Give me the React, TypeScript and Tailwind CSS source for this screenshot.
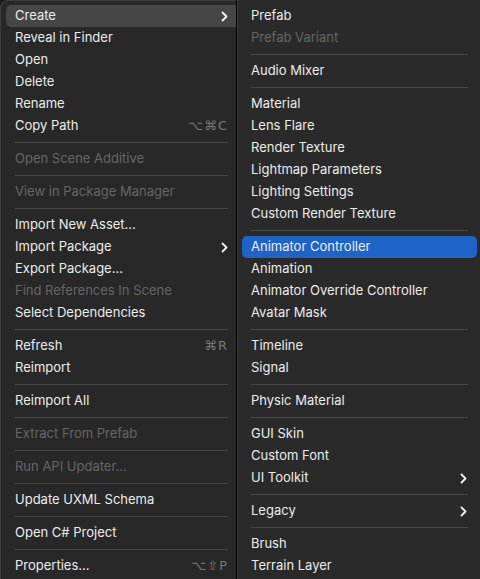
import * as React from "react"

type Item =
  | { sep: true }
  | { label: string; disabled?: boolean; sub?: boolean; shortcut?: string; active?: boolean; selected?: boolean }

const leftItems: Item[] = [
  { label: "Create", sub: true, active: true },
  { label: "Reveal in Finder" },
  { label: "Open" },
  { label: "Delete" },
  { label: "Rename" },
  { label: "Copy Path", shortcut: "⌥⌘C" },
  { sep: true },
  { label: "Open Scene Additive", disabled: true },
  { sep: true },
  { label: "View in Package Manager", disabled: true },
  { sep: true },
  { label: "Import New Asset..." },
  { label: "Import Package", sub: true },
  { label: "Export Package..." },
  { label: "Find References In Scene", disabled: true },
  { label: "Select Dependencies" },
  { sep: true },
  { label: "Refresh", shortcut: "⌘R" },
  { label: "Reimport" },
  { sep: true },
  { label: "Reimport All" },
  { sep: true },
  { label: "Extract From Prefab", disabled: true },
  { sep: true },
  { label: "Run API Updater...", disabled: true },
  { sep: true },
  { label: "Update UXML Schema" },
  { sep: true },
  { label: "Open C# Project" },
  { sep: true },
  { label: "Properties...", shortcut: "⌥⇧P" },
]

const rightItems: Item[] = [
  { label: "Prefab" },
  { label: "Prefab Variant", disabled: true },
  { sep: true },
  { label: "Audio Mixer" },
  { sep: true },
  { label: "Material" },
  { label: "Lens Flare" },
  { label: "Render Texture" },
  { label: "Lightmap Parameters" },
  { label: "Lighting Settings" },
  { label: "Custom Render Texture" },
  { sep: true },
  { label: "Animator Controller", selected: true },
  { label: "Animation" },
  { label: "Animator Override Controller" },
  { label: "Avatar Mask" },
  { sep: true },
  { label: "Timeline" },
  { label: "Signal" },
  { sep: true },
  { label: "Physic Material" },
  { sep: true },
  { label: "GUI Skin" },
  { label: "Custom Font" },
  { label: "UI Toolkit", sub: true },
  { sep: true },
  { label: "Legacy", sub: true },
  { sep: true },
  { label: "Brush" },
  { label: "Terrain Layer" },
]

function Chevron() {
  return (
    <svg width="7" height="11" viewBox="0 0 7 11" fill="none" stroke="#f2f2f2" strokeWidth="1.8" strokeLinecap="round" strokeLinejoin="round">
      <path d="M1.5 1.5L5.5 5.5L1.5 9.5" />
    </svg>
  )
}

function MenuList({ items, side }: { items: Item[]; side: "left" | "right" }) {
  const rowOuter = side === "left" ? "ml-[5px] pl-[9px] pr-[8px]" : "ml-[4px] mr-[3px] pl-[9px] pr-[10px]"
  const sepOuter = side === "left" ? "ml-[14px] mr-[8px]" : "ml-[13px] mr-[12px]"

  return (
    <div className="flex flex-col">
      {items.map((item, i) => {
        if ("sep" in item) {
          return (
            <div key={i} className={`h-[11px] flex items-center ${sepOuter}`}>
              <div className="h-px w-full bg-[#474747]" />
            </div>
          )
        }
        let bg = ""
        if (item.active) bg = "bg-[#464646] rounded-l-[5px]"
        if (item.selected) bg = "bg-[#1f63c6] rounded-[5px]"
        return (
          <div key={i} className={`h-[22px] flex items-center justify-between ${rowOuter} ${bg}`}>
            <span className={item.disabled ? "text-[#666666]" : "text-[#ececec]"}>{item.label}</span>
            {item.sub && <Chevron />}
            {item.shortcut && (
              <span className="text-[#787878] tracking-[1px]" style={{ fontFamily: '"DejaVu Sans", Inter, sans-serif', fontSize: 13 }}>
                {item.shortcut}
              </span>
            )}
          </div>
        )
      })}
    </div>
  )
}

export default function App() {
  return (
    <div
      className="w-[480px] h-[579px] bg-[#1b1b1b] flex overflow-hidden text-[13px] antialiased"
      style={{ fontFamily: 'Inter, "Noto Sans", sans-serif' }}
    >
      <div className="w-[237px] h-full bg-[#282828] border-l border-t border-[#3e3e3e] border-r-black rounded-tl-[8px] pt-[4px] shrink-0 border-r">
        <MenuList items={leftItems} side="left" />
      </div>
      <div className="flex-1 h-full bg-[#2a2a2a] border-l border-[#3c3c3c] pt-[5px]">
        <MenuList items={rightItems} side="right" />
      </div>
    </div>
  )
}
